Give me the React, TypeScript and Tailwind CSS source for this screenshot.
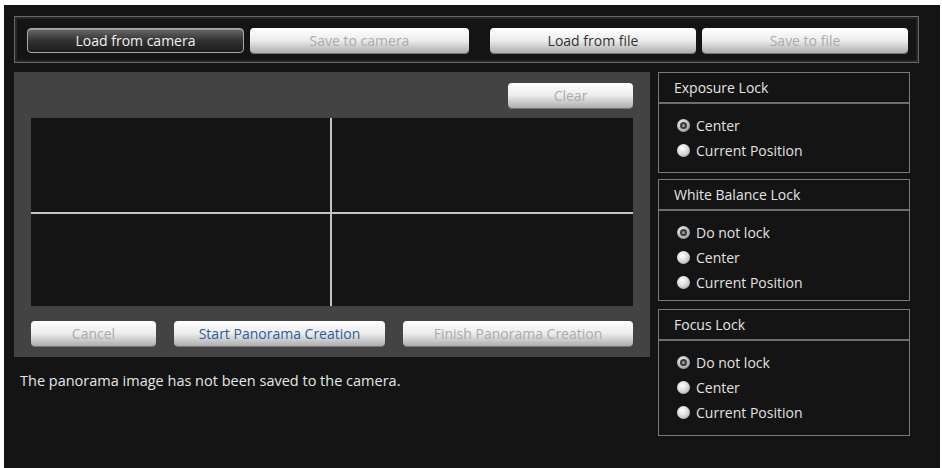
import { ReactNode } from 'react';

type BtnProps = {
  label: string;
  width: string;
  variant?: 'dark' | 'light' | 'disabled' | 'primary';
};

// Glossy toolbar-style button
function Btn({ label, width, variant = 'light' }: BtnProps) {
  const base =
    'h-[25px] rounded-[4px] flex items-center justify-center text-[14px] leading-none shrink-0';
  const styles = {
    dark: 'bg-linear-to-b from-[#6a6a6a] via-[#333] to-[#1c1c1c] border border-[#a8a8a8] text-[#f0f0f0] shadow-[inset_0_1px_0_#999]',
    light: 'bg-linear-to-b from-[#ffffff] via-[#ececec] to-[#aeaeae] text-[#333] shadow-[0_1px_0_#777]',
    disabled: 'bg-linear-to-b from-[#ffffff] via-[#ececec] to-[#aeaeae] text-[#ababab] shadow-[0_1px_0_#777]',
    primary: 'bg-linear-to-b from-[#ffffff] via-[#ececec] to-[#aeaeae] text-[#2d5c9c] shadow-[0_1px_0_#777]',
  };
  return <div className={`${base} ${styles[variant]} ${width}`}>{label}</div>;
}

function Radio({ checked, label }: { checked?: boolean; label: string }) {
  return (
    <div className="h-[25px] flex items-center">
      {checked ? (
        <span className="w-[13px] h-[13px] rounded-full bg-[radial-gradient(circle_at_40%_35%,#f4f4f4,#b0b0b0_60%,#707070)] flex items-center justify-center">
          <span className="w-[7px] h-[7px] rounded-full border-2 border-[#3a3a3a] bg-[#9a9a9a]" />
        </span>
      ) : (
        <span className="w-[13px] h-[13px] rounded-full bg-[radial-gradient(circle_at_40%_35%,#ffffff,#d8d8d8_50%,#8a8a8a)]" />
      )}
      <span className="ml-[6px] text-[14px] text-[#e2e2e2]">{label}</span>
    </div>
  );
}

function LockPanel({ title, height, children }: { title: string; height: string; children: ReactNode }) {
  return (
    <div className={`border border-[#7a7a7a] flex flex-col ${height}`}>
      <div className="h-[31px] border-b-2 border-[#6e6e6e] flex items-center pl-[15px] text-[14px] text-[#e4e4e4]">
        {title}
      </div>
      <div className="pl-[18px] pt-[9px]">{children}</div>
    </div>
  );
}

export default function App() {
  return (
    <div
      className="w-[942px] h-[468px] bg-white pt-[5px] pl-[4px] pr-[2px] overflow-hidden"
      style={{ fontFamily: '"Open Sans", "DejaVu Sans", sans-serif' }}
    >
      <div className="bg-[#141414] h-full pl-[10px] pt-[11px]">
        {/* Top toolbar */}
        <div className="w-[905px] h-[47px] border border-[#6a6a6a] shadow-[inset_0_0_0_2px_#262626] flex items-start pt-[11px] pl-[12px]">
          <Btn label="Load from camera" width="w-[217px]" variant="dark" />
          <div className="w-[6px]" />
          <Btn label="Save to camera" width="w-[219px]" variant="disabled" />
          <div className="w-[21px]" />
          <Btn label="Load from file" width="w-[206px]" />
          <div className="w-[6px]" />
          <Btn label="Save to file" width="w-[206px]" variant="disabled" />
        </div>

        <div className="flex mt-[9px] gap-[8px]">
          {/* Left column */}
          <div className="w-[636px]">
            <div className="h-[285px] bg-[#434343] px-[17px] pt-[11px] flex flex-col">
              <div className="flex justify-end">
                <Btn label="Clear" width="w-[125px]" variant="disabled" />
              </div>
              <div className="mt-[10px] h-[188px] bg-[#c4c4c4] grid grid-cols-[299px_1fr] grid-rows-[94px_1fr] gap-[2px]">
                <div className="bg-[#151515]" />
                <div className="bg-[#151515]" />
                <div className="bg-[#151515]" />
                <div className="bg-[#151515]" />
              </div>
              <div className="flex mt-[15px] gap-[18px]">
                <Btn label="Cancel" width="w-[125px]" variant="disabled" />
                <Btn label="Start Panorama Creation" width="w-[211px]" variant="primary" />
                <Btn label="Finish Panorama Creation" width="w-[230px]" variant="disabled" />
              </div>
            </div>
            <p className="mt-[13px] pl-[6px] text-[14.5px] text-[#e6e6e6]">
              The panorama image has not been saved to the camera.
            </p>
          </div>

          {/* Right column */}
          <div className="w-[252px] flex flex-col">
            <LockPanel title="Exposure Lock" height="h-[101px]">
              <Radio checked label="Center" />
              <Radio label="Current Position" />
            </LockPanel>
            <div className="h-[6px]" />
            <LockPanel title="White Balance Lock" height="h-[122px]">
              <Radio checked label="Do not lock" />
              <Radio label="Center" />
              <Radio label="Current Position" />
            </LockPanel>
            <div className="h-[8px]" />
            <LockPanel title="Focus Lock" height="h-[127px]">
              <Radio checked label="Do not lock" />
              <Radio label="Center" />
              <Radio label="Current Position" />
            </LockPanel>
          </div>
        </div>
      </div>
    </div>
  );
}
